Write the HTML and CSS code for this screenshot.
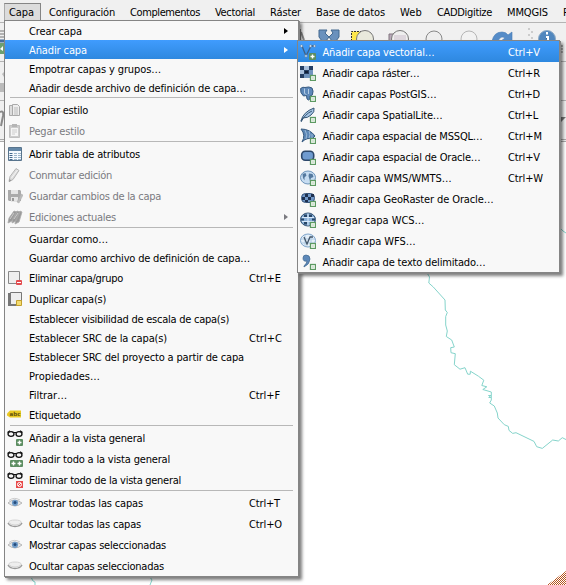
FILE: index.html
```html
<!DOCTYPE html>
<html lang="es">
<head>
<meta charset="utf-8">
<title>Capa</title>
<link rel="stylesheet" href="styles.css">
</head>
<body>
<svg class="defs" width="0" height="0">
  <defs>
    <g id="plus"><rect x="10.500" y="10.500" width="5" height="5" fill="#fff" stroke="#5d9a62" stroke-width="1.300"/><path d="M13 11.500v3M11.500 13h3" stroke="#c4dcc4" fill="none"/></g>
    <g id="specs"><path d="M.5 2.500L3 .8M15.500 2.500L13 .8M6 2.500h4" stroke="#111" fill="none" stroke-width="1.200"/><ellipse cx="4" cy="4" rx="3" ry="2.300" fill="#f8f8f8" stroke="#111" stroke-width="1.300"/><ellipse cx="12" cy="4" rx="3" ry="2.300" fill="#f8f8f8" stroke="#111" stroke-width="1.300"/></g>
    <g id="green"><rect x="9" y="9" width="7" height="7" rx="1" fill="#5c8d61"/><path d="M12.500 10.500v4M10.500 12.500h4" stroke="#fff" stroke-width="1.400"/></g>
    <g id="eye"><path d="M1 8Q7 2 15 8Q8 14 1 8z" fill="#e6e6e6" stroke="#aaa" stroke-width=".8"/><path d="M2 5.500Q7 1.500 13 5" fill="none" stroke="#ccc"/><circle cx="8" cy="7.800" r="3.100" fill="#6f9bc8"/><circle cx="8" cy="7.500" r="1.500" fill="#244c7c"/></g>
    <g id="closed"><path d="M1.500 6.500Q2 4 8 4T14.500 6.500Q12 9 8 9T1.500 6.500z" fill="#eee" stroke="#ccc" stroke-width=".8"/><path d="M1 7Q3 10.500 8 10.500T15 7" fill="none" stroke="#999" stroke-width="1.400"/></g>
    <pattern id="dither" width="2" height="2" patternUnits="userSpaceOnUse"><path d="M0 0h1v1H0zM1 1h1v1H1z" fill="#b5531c"/></pattern>
  </defs>
</svg>
<main class="window">
  <nav class="menubar">
    <span class="entry open"><b data-w="25">Capa</b></span>
    <span class="entry"><b data-w="66">Configuración</b></span>
    <span class="entry"><b data-w="70">Complementos</b></span>
    <span class="entry"><b data-w="40">Vectorial</b></span>
    <span class="entry"><b data-w="31">Ráster</b></span>
    <span class="entry"><b data-w="69">Base de datos</b></span>
    <span class="entry"><b data-w="22">Web</b></span>
    <span class="entry"><b data-w="55">CADDigitize</b></span>
    <span class="entry"><b data-w="41">MMQGIS</b></span>
    <span class="entry"><b>P</b></span>
  </nav>
  <div class="bar"></div>
  <div class="bar"></div>
  <div class="bar last"></div>
  <div class="canvas"></div>

  <svg class="backdrop" width="566" height="585" viewBox="0 0 566 585">
    <path d="M300 29v11M301 32l3 8" stroke="#888" stroke-width="2"/>
    <path d="M319 30h8l-2 3 4 4-3 4h-4l-3-4zM339 30h-8l2 3-4 4 3 4h4l3-4z" fill="#6a91bd" stroke="#42688f"/>
    <path d="M351.500 41V31.500h10" fill="#ffe84a" stroke="#333" stroke-dasharray="2 1"/><path d="M352 32h9v9h-9z" fill="#ffe84a"/>
    <circle cx="365" cy="39" r="8.500" fill="#e9e9dc" stroke="#777"/>
    <path d="M389 34h7v7h-7z" fill="#b9aabb" stroke="#81747f"/><circle cx="400" cy="39" r="8.500" fill="#eee" stroke="#777"/><path d="M394 35h12v6h-12z" fill="#ddd6dd"/>
    <circle cx="434" cy="39" r="8" fill="#eee" stroke="#888"/><circle cx="469" cy="39" r="8" fill="#f2f2f2" stroke="#b5b5b5"/>
    <path d="M492 41Q494 32 502 32q4 0 6 3l4-3v9h-11l4-3q-4-3-7 3z" fill="#558cc8" stroke="#477bb4" stroke-width=".6"/>
    <path d="M528 28h2v2h-2zM531 31h2v2h-2zM528 34h2v2h-2zM531 37h2v2h-2z" fill="#ccc"/>
    <circle cx="547" cy="39" r="8.500" fill="#5187be" stroke="#8fabc6"/><path d="M547 32v2.500M546 37h2v4" stroke="#fff" stroke-width="2"/>
    <path d="M0 31h4M0 34h4M0 37h4" stroke="#777"/><path d="M0 41h4" stroke="#446d9d" stroke-width="3"/><path d="M0 43h4v11H0z" fill="#6d9f70"/><path d="M0 49l3-3v5z" fill="#fff"/>
    <path d="M2 74l2-2v5zM0 83h4v9H0z" fill="#bbb"/><path d="M0 112q4-2 3 4l-2 10" stroke="#888" stroke-width="2" fill="none"/>
    <path d="M561 46h2M561 49h2M561 52h2" stroke="#777"/><path d="M560 117h6l-5 5z" fill="#777"/>
    <g class="coast">
      <path d="M426.500 272l3 5-.7 6 4.500 4L445 300l.3 10 2 2.500-1.600 4v8.500l1.600 6-1 5.500 5.400 3.500 2.600 7-3.600.7.300 5 4.300 1-1 11 5.700 4.500 5-1.500 2.700 6.500h2.500l.2-3 8 5 5.400 4-2 5.300 5 1.300-4 2.700 8.500 2.500v8l-1.600 3 4.600 3 3 7 .7 5 6.300 6.700 4 1.700.7 4 3.700 3 3.300-.7 18 8.700 2.700 5.300 5.600 1.700 10.400-8.400 5.600 1 4-3.300 4 2"/>
      <path d="M491 395.500h-2.500l2.500 2h-2.500"/>
      <path d="M560 228l3 3 3 2M31 577l2 4 2 1v3M150 577l2 3-2 5"/>
    </g>
    <path d="M547 585l19-14v14z" fill="url(#dither)"/>
  </svg>

  <section class="menu main">
    <div class="row plain"><i></i><span data-w="53">Crear capa</span><em class="arrow"></em></div>
    <div class="row plain on"><i></i><span data-w="58">Añadir capa</span><em class="arrow"></em></div>
    <div class="row plain"><i></i><span data-w="132">Empotrar capas y grupos…</span></div>
    <div class="row plain"><i></i><span data-w="217">Añadir desde archivo de definición de capa…</span></div>
    <hr>
    <div class="row"><svg viewBox="0 0 16 16"><path d="M2.500 3.500h6v10h-6z" fill="#ddd" stroke="#aaa"/><path d="M5.500 2.500h5l2 2v9h-7z" fill="#eee" stroke="#aaa"/><path d="M7 6h4M7 8h4M7 10h4M7 12h4" stroke="#bbb"/></svg><span data-w="59">Copiar estilo</span></div>
    <div class="row off"><svg viewBox="0 0 16 16"><path d="M2.500 2.500h10v12h-10z" fill="#ccc" stroke="#c1c1c1"/><path d="M4 5h7v8H4z" fill="#f5f5f5"/><path d="M5 1h5v3H5z" fill="#b5b5b5"/><path d="M5 7h5M5 9h5M5 11h3" stroke="#ccc"/></svg><span data-w="56">Pegar estilo</span></div>
    <hr>
    <div class="row"><svg viewBox="0 0 16 16"><path d="M1.500 1.500h13v13h-13z" fill="#f5faff" stroke="#58748d"/><path d="M2 2h12v3H2z" fill="#6488a8"/><path d="M2.500 7.500h3M2.500 9.500h3M2.500 11.500h3M2.500 13.500h3" stroke="#43698c"/><path d="M7 7.500h3M11 7.500h3M7 9.500h3M11 9.500h3M7 11.500h3M11 11.500h3M7 13.500h3M11 13.500h3" stroke="#9bb5ca"/></svg><span data-w="111">Abrir tabla de atributos</span></div>
    <div class="row off"><svg viewBox="0 0 16 16"><path d="M2 14.500l1-5 6-8 3 2-6 9z" fill="#ddd" stroke="#b5b5b5"/><path d="M4.500 11l6-8" stroke="#f4f4f4"/><path d="M2 15l.5-3 2 1.500z" fill="#999"/></svg><span data-w="83">Conmutar edición</span></div>
    <div class="row off"><svg viewBox="0 0 16 16"><path d="M1 2h12l1 1v10H2l-1-1z" fill="#aaa"/><path d="M4 2h7v4H4zM4 9h7v5H4z" fill="#e5e5e5"/><path d="M5 10h2v3H5z" fill="#999"/><path d="M10 14l4-8 2 1-4 8z" fill="#bbb" stroke="#aaa" stroke-width=".5"/></svg><span data-w="132">Guardar cambios de la capa</span></div>
    <div class="row off"><svg viewBox="0 0 16 16"><path d="M1 14l1-5 5-7 3 1-5 9zM5 14l1-5 4-7 3 1-4 9zM8 15l1-5 4-8 2 1-3 10z" fill="#999" stroke="#aaa" stroke-width=".8"/><path d="M3 10l4-6M7 10l4-6" stroke="#ccc"/></svg><span data-w="87">Ediciones actuales</span><em class="arrow"></em></div>
    <hr>
    <div class="row plain"><i></i><span data-w="79">Guardar como…</span></div>
    <div class="row plain"><i></i><span data-w="221">Guardar como archivo de definición de capa…</span></div>
    <div class="row"><svg viewBox="0 0 16 16"><path d="M1.500 1.500h11v12h-11z" fill="#eee" stroke="#888"/><rect x="9" y="10" width="6" height="5" rx="1" fill="#e34c50"/><path d="M10 12.500h4" stroke="#fff"/></svg><span data-w="94">Eliminar capa/grupo</span><kbd data-w="32">Ctrl+E</kbd></div>
    <div class="row"><svg viewBox="0 0 16 16"><path d="M1 2h3v12h8v1H1z" fill="#777"/><path d="M3.500 1.500h11v12h-11z" fill="#eee" stroke="#777"/><path d="M9.500 9.500h5v5h-5z" fill="#f4dc70" stroke="#c3a02d"/></svg><span data-w="77">Duplicar capa(s)</span></div>
    <div class="row plain"><i></i><span data-w="200">Establecer visibilidad de escala de capa(s)</span></div>
    <div class="row plain"><i></i><span data-w="138">Establecer SRC de la capa(s)</span><kbd data-w="33">Ctrl+C</kbd></div>
    <div class="row plain"><i></i><span data-w="215">Establecer SRC del proyecto a partir de capa</span></div>
    <div class="row plain"><i></i><span data-w="71">Propiedades…</span></div>
    <div class="row plain"><i></i><span data-w="38">Filtrar…</span><kbd data-w="31">Ctrl+F</kbd></div>
    <div class="row"><svg viewBox="0 0 16 16"><path d="M0 6.500l3-3h11v7H3l-3-2z" fill="#e9c923"/><text class="tag" x="2.500" y="9">abc</text></svg><span data-w="52">Etiquetado</span></div>
    <hr>
    <div class="row"><svg viewBox="0 0 16 16"><use href="#specs"/><use href="#green"/></svg><span data-w="116">Añadir a la vista general</span></div>
    <div class="row"><svg viewBox="0 0 16 16"><use href="#specs"/><use href="#green"/><use href="#green" x="-6"/></svg><span data-w="141">Añadir todo a la vista general</span></div>
    <div class="row"><svg viewBox="0 0 16 16"><use href="#specs"/><path d="M9 9h7v7H9z" fill="#e84b4b"/><circle cx="12.500" cy="12.500" r="2" fill="none" stroke="#fff"/><path d="M11 14l3-3" stroke="#fff"/></svg><span data-w="152">Eliminar todo de la vista general</span></div>
    <hr>
    <div class="row"><svg viewBox="0 0 16 16"><use href="#eye"/></svg><span data-w="114">Mostrar todas las capas</span><kbd data-w="31">Ctrl+T</kbd></div>
    <div class="row"><svg viewBox="0 0 16 16"><use href="#closed"/></svg><span data-w="112">Ocultar todas las capas</span><kbd data-w="33">Ctrl+O</kbd></div>
    <div class="row"><svg viewBox="0 0 16 16"><use href="#eye"/></svg><span data-w="137">Mostrar capas seleccionadas</span></div>
    <div class="row"><svg viewBox="0 0 16 16"><use href="#closed"/></svg><span data-w="135">Ocultar capas seleccionadas</span></div>
  </section>

  <section class="menu sub">
    <div class="row on"><svg viewBox="0 0 16 16"><path d="M2 2l4 10 5-10h3" fill="none" stroke="#426184" stroke-width="1.300"/><g fill="#d4e4f5" stroke="#58799c" stroke-width=".6"><circle cx="1.500" cy="2" r="1.300"/><circle cx="6" cy="12" r="1.300"/><circle cx="10.500" cy="2" r="1.300"/><circle cx="14.500" cy="2" r="1.200"/></g><use href="#green"/></svg><span data-w="112">Añadir capa vectorial…</span><kbd data-w="32">Ctrl+V</kbd></div>
    <div class="row"><svg viewBox="0 0 16 16"><path d="M0 1h13v12H0z" fill="#7194bd"/><path d="M0 1h4v4H0zM9 1h4v4H9zM4 5h5v4H4zM0 9h4v4H0z" fill="#263f63"/><path d="M4 1h5v4H4zM0 5h4v4H0z" fill="#a9c0dc"/><path d="M5 6h3v2H5z" fill="#111f38"/><use href="#plus"/></svg><span data-w="97">Añadir capa ráster…</span><kbd data-w="32">Ctrl+R</kbd></div>
    <div class="row"><svg viewBox="0 0 16 16"><path d="M.6 2.500Q3 .5 5 1.500 9 .2 12 2q2 3 .3 7l-2.300 1q.5 4-1.500 4T6.500 9.500L3.500 10Q0 7 .6 2.500z" fill="#5e88b8" stroke="#375a81"/><path d="M4.500 2.500v5l2 1M8.500 3v5" stroke="#b4cce4" fill="none"/><use href="#plus"/></svg><span data-w="114">Añadir capas PostGIS…</span><kbd data-w="32">Ctrl+D</kbd></div>
    <div class="row"><svg viewBox="0 0 16 16"><path d="M1 14Q3 5 14 1q1 4-3 7-3 3-8 3z" fill="#a9c7e5" stroke="#355675"/><path d="M1 15Q5 7 12 4" fill="none" stroke="#355675"/><use href="#plus"/></svg><span data-w="120">Añadir capa SpatialLite…</span><kbd data-w="30">Ctrl+L</kbd></div>
    <div class="row"><svg viewBox="0 0 16 16"><path d="M1 1q9 0 14 7l-3 3q-5-2-10 3 4-7-1-13z" fill="#5b86b5" stroke="#385b80"/><path d="M5 2q3 5 1 9M9 3q2 4 0 7M12 6v4" fill="none" stroke="#a9c4de" stroke-width=".8"/><use href="#plus"/></svg><span data-w="160">Añadir capa espacial de MSSQL…</span><kbd data-w="34">Ctrl+M</kbd></div>
    <div class="row"><svg viewBox="0 0 16 16"><rect x="1.700" y="2.200" width="12" height="9" rx="3.500" fill="#6f9bd0" stroke="#2d486b" stroke-width="1.600"/><use href="#plus"/></svg><span data-w="158">Añadir capa espacial de Oracle…</span><kbd data-w="32">Ctrl+V</kbd></div>
    <div class="row"><svg viewBox="0 0 16 16"><ellipse cx="8" cy="7.500" rx="7.500" ry="6.500" fill="#c7ddf2" stroke="#6d94ba"/><path d="M2.500 4l3-1 1 2.500-2 2v3L3 8zM9 3.500l3.500.5 1 3-2.500 1-1 3-1.500-5z" fill="#54799f"/><use href="#plus"/></svg><span data-w="129">Añadir capa WMS/WMTS…</span><kbd data-w="35">Ctrl+W</kbd></div>
    <div class="row"><svg viewBox="0 0 16 16"><rect x="1.500" y="2.500" width="13" height="9" rx="4" fill="#7098c9" stroke="#38557a"/><path d="M5 3h3v3H5zM11 3h3v3h-3zM2 6h3v3H2zM8 6h3v3H8zM5 9h3v2H5z" fill="#1e3150"/><use href="#plus"/></svg><span data-w="171">Añadir capa GeoRaster de Oracle…</span></div>
    <div class="row"><svg viewBox="0 0 16 16"><ellipse cx="8" cy="7.500" rx="7.500" ry="6.500" fill="#88afd8" stroke="#365575"/><path d="M4 2.500h3V5H4zM9 2.500h3V5H9zM4 10h3v2.500H4zM1 6.500h3v2H1zM12 6.500h3v2h-3z" fill="#284667"/><path d="M2 5.500h12M2 9.500h12M8 1.500v12" stroke="#d8e9fa"/><use href="#plus"/></svg><span data-w="102">Agregar capa WCS…</span></div>
    <div class="row"><svg viewBox="0 0 16 16"><ellipse cx="8" cy="7.500" rx="7.500" ry="6.500" fill="#e4eff9" stroke="#7ca3ca"/><path d="M1 6h14M2 10h12M5 2v11M11 2v11" stroke="#b0cbe4" fill="none"/><path d="M4 4l3 7 3-7h3" fill="none" stroke="#43566a" stroke-width="1.300"/><use href="#plus"/></svg><span data-w="93">Añadir capa WFS…</span></div>
    <div class="row"><svg viewBox="0 0 16 16"><path d="M3 4q0-3 3-3 4 0 4 4 0 5-6 8v-1q3-3 3-5Q3 8 3 4z" fill="#5d88b9" stroke="#41688f" stroke-width=".7"/><use href="#plus"/></svg><span data-w="163">Añadir capa de texto delimitado…</span></div>
  </section>
</main>
<script src="fit.js"></script>
</body>
</html>
```
FILE: styles.css
```css
* { box-sizing: border-box; }
body { margin: 0; overflow: hidden; background: #fff; }
.defs { position: absolute; }
.window {
  position: relative;
  width: 566px;
  height: 585px;
  overflow: hidden;
  display: flex;
  flex-direction: column;
  font: 11px "DejaVu Sans Condensed", "DejaVu Sans", sans-serif;
  font-stretch: condensed;
  color: #000;
}
.menubar {
  display: flex;
  gap: 3px;
  height: 23px;
  padding: 3px 0 0 4px;
  background: #f0f0f0;
  border-bottom: 1px solid #b4b4b4;
  white-space: nowrap;
}
.entry {
  flex: none;
  height: 18px;
  padding: 0 6px;
  line-height: 20px;
}
.entry.open {
  padding: 0 5px;
  width: 37px;
  line-height: 18px;
  background: #dcdcdc;
  border: 1px solid #858585;
  border-left-color: #aaa;
  padding-left: 4px;
}
.entry:nth-child(2) { margin-left: -1px; }
b { font-weight: normal; display: inline-block; }
.bar { height: 39px; background: #f0f0f0; border-bottom: 1px solid #b4b4b4; }
.bar.last { height: 41px; border-bottom: 3px double #aaa; }
.canvas { flex: 1; background: #fff; }
.backdrop { position: absolute; left: 0; top: 0; }
.coast { fill: none; stroke: #85d4cb; stroke-width: 1; }
.menu {
  position: absolute;
  background: #f8f8f8;
  border: 1px solid #858585;
  box-shadow: 1px 1px 0 #858585, 3px 3px 3px rgba(0, 0, 0, .5);
}
.main { left: 4px; top: 20px; width: 295px; height: 557px; }
.sub { left: 297px; top: 40px; width: 263px; height: 233px; }
.row {
  position: relative;
  display: flex;
  align-items: center;
  height: 21px;
  padding-left: 2px;
  white-space: nowrap;
}
.row.plain { height: 19px; }
.row svg, .row i { width: 16px; height: 16px; flex: none; margin-right: 6px; }
.row span, .row kbd { padding-top: 2px; }
.row.on { background: linear-gradient(#409cfe, #2e88df); color: #fff; }
.row.off { color: #7a7a80; }
kbd { font: inherit; position: absolute; left: 244px; }
.sub kbd { left: 210px; }
.arrow {
  margin-left: auto;
  margin-right: 10px;
  border: solid transparent;
  border-width: 3.5px 0 3.5px 4px;
  border-left-color: currentColor;
}
.sub .row svg { margin-right: 6.5px; }
.tag { font: bold 5.5px "DejaVu Sans", sans-serif; fill: #65530c; }
hr { height: 1px; margin: 0 5px 1px; border: 0; background: #b8b8b8; }
```
FILE: fit.js
```js
// Tighten each label's tracking so that it takes its design width.
document.querySelectorAll("[data-w]").forEach(function (el) {
  var natural = el.getBoundingClientRect().width;
  el.style.letterSpacing = (el.dataset.w - natural) / el.textContent.length + "px";
});
```
